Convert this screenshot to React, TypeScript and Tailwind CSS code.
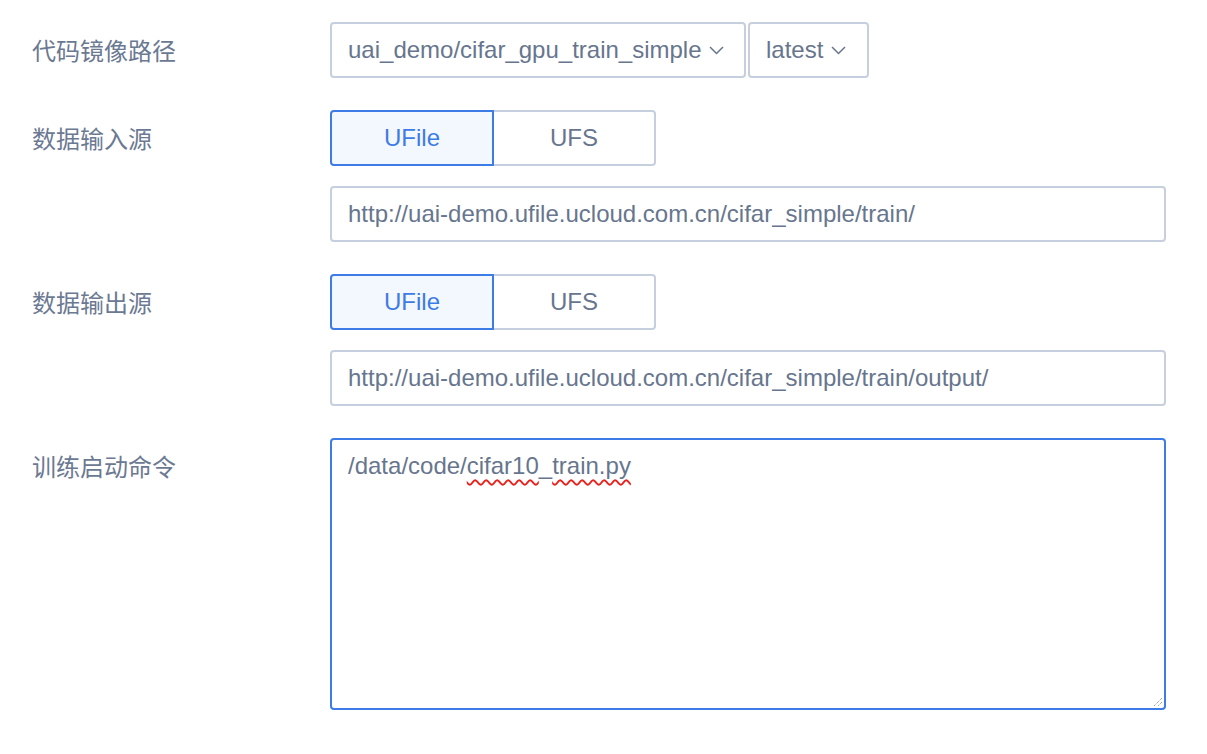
import type { ReactNode } from 'react';

const font = { fontFamily: '"Liberation Sans", Arial, "Noto Sans CJK SC", sans-serif' };

function Chevron() {
  return (
    <svg width="15" height="9" viewBox="0 0 15 9" fill="none" className="shrink-0">
      <polyline points="1,1 7.5,7.5 14,1" stroke="#67768e" strokeWidth="1.5" />
    </svg>
  );
}

function Row({ label, children }: { label: string; children: ReactNode }) {
  return (
    <div className="flex items-start">
      <div
        className="w-[298px] h-[56px] flex items-center text-[24px] text-[#6b7992] shrink-0"
        style={{ fontFamily: '"Noto Sans CJK SC", "Liberation Sans", sans-serif' }}
      >
        {label}
      </div>
      <div className="flex-1">{children}</div>
    </div>
  );
}

function Segment() {
  return (
    <div className="flex h-[56px] w-[326px] text-[24px]">
      <div className="flex-1 flex items-center justify-center border-2 border-[#3d7be6] bg-[#f3f8ff] text-[#3d7be6] rounded-l-[4px]">
        UFile
      </div>
      <div className="flex-1 flex items-center justify-center border-2 border-l-0 border-[#c6cfdd] text-[#67768e] rounded-r-[4px]">
        UFS
      </div>
    </div>
  );
}

function TextInput({ value }: { value: string }) {
  return (
    <div className="h-[56px] w-[836px] flex items-center px-4 border-2 border-[#c6cfdd] rounded-[4px] text-[24px] text-[#67768e]">
      {value}
    </div>
  );
}

export default function App() {
  const squiggle = 'underline decoration-wavy decoration-[#e8211c] decoration-[1.5px] underline-offset-[5px]';

  return (
    <div className="min-h-screen bg-white pl-8 pt-[22px]" style={font}>
      <div className="flex flex-col gap-8">
        <Row label="代码镜像路径">
          <div className="flex gap-[2px] text-[24px] text-[#67768e]">
            <div className="h-[56px] w-[416px] flex items-center justify-between pl-4 pr-5 border-2 border-[#c6cfdd] rounded-[4px]">
              <span>uai_demo/cifar_gpu_train_simple</span>
              <Chevron />
            </div>
            <div className="h-[56px] w-[121px] flex items-center gap-[8px] pl-4 border-2 border-[#c6cfdd] rounded-[4px]">
              <span>latest</span>
              <Chevron />
            </div>
          </div>
        </Row>

        <Row label="数据输入源">
          <div className="flex flex-col gap-5">
            <Segment />
            <TextInput value="http://uai-demo.ufile.ucloud.com.cn/cifar_simple/train/" />
          </div>
        </Row>

        <Row label="数据输出源">
          <div className="flex flex-col gap-5">
            <Segment />
            <TextInput value="http://uai-demo.ufile.ucloud.com.cn/cifar_simple/train/output/" />
          </div>
        </Row>

        <Row label="训练启动命令">
          <div className="relative h-[272px] w-[836px] border-2 border-[#3d7be6] rounded-[4px] px-4 pt-[11px] text-[24px] leading-[30px] text-[#67768e]">
            /data/code/<span className={squiggle}>cifar10</span>_<span className={squiggle}>train.py</span>
            <svg width="10" height="10" viewBox="0 0 10 10" className="absolute right-[1px] bottom-[1px]">
              <line x1="9" y1="1" x2="1" y2="9" stroke="#777" strokeWidth="1" strokeDasharray="1 1" />
              <line x1="9" y1="5" x2="5" y2="9" stroke="#777" strokeWidth="1" strokeDasharray="1 1" />
            </svg>
          </div>
        </Row>
      </div>
    </div>
  );
}
